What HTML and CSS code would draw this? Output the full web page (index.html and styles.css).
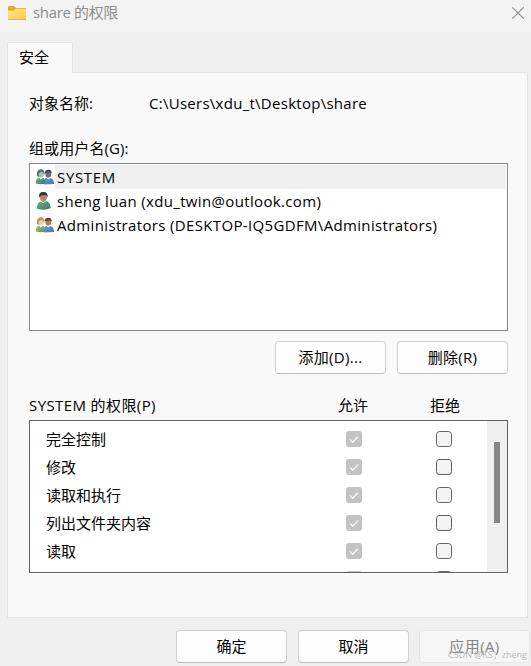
FILE: index.html
```html
<!DOCTYPE html>
<html lang="zh-CN">
<head>
<meta charset="utf-8">
<title>share 的权限</title>
<link rel="stylesheet" href="styles.css">
</head>
<body>
<svg class="defs" width="0" height="0" aria-hidden="true">
  <defs>
    <linearGradient id="gold" x1="0" y1="0" x2="1" y2="1"><stop offset="0" stop-color="#ffe59a"/><stop offset="1" stop-color="#fbc840"/></linearGradient>
    <linearGradient id="green" x1="0" y1="0" x2="1" y2="1"><stop offset="0" stop-color="#6fae8c"/><stop offset="1" stop-color="#2b8258"/></linearGradient>
    <linearGradient id="blue" x1="0" y1="0" x2="1" y2="1"><stop offset="0" stop-color="#6f97c8"/><stop offset="1" stop-color="#4678b4"/></linearGradient>
    <linearGradient id="olive" x1="0" y1="0" x2="1" y2="1"><stop offset="0" stop-color="#a5c58c"/><stop offset="1" stop-color="#55924a"/></linearGradient>
    <symbol id="box-on" viewBox="0 0 16 16"><rect width="16" height="16" rx="3" fill="#c3c3c3"/><path d="M4 8.3l2.7 2.8L12 5.6" fill="none" stroke="#fff" stroke-width="1.1"/></symbol>
    <symbol id="box-off" viewBox="0 0 16 16"><rect x=".5" y=".5" width="15" height="15" rx="3" fill="#f3f3f3" stroke="#626262"/></symbol>
  </defs>
</svg>
<div class="window">
  <header class="titlebar">
    <svg class="folder" width="18" height="14" viewBox="0 0 18 14"><path d="M0 1.2Q0 0 1.2 0h4.3q.6 0 1 .5L8 2h8.8Q18 2 18 3.2V8H0z" fill="#e9aa20"/><path d="M0 4.4h6.1L8 2.8h10v10q0 1.2-1.2 1.2H1.2Q0 14 0 12.8z" fill="url(#gold)"/><path d="M.3 13.5h17.4" stroke="#e8ae35"/></svg>
    <h1>share 的权限</h1>
    <svg class="close" width="12" height="12" viewBox="0 0 12 12"><path d="M.3.3l11.4 11.4M11.7.3L.3 11.7" stroke="#8b8b8b" stroke-width="1.1"/></svg>
  </header>
  <nav class="tabs"><span class="tab">安全</span></nav>
  <main class="panel">
    <div class="object"><span class="key">对象名称:</span><span class="path">C:\Users\xdu_t\Desktop\share</span></div>
    <div class="caption">组或用户名(G):</div>
    <ul class="users">
      <li>
        <svg width="18" height="16" viewBox="0 0 18 16"><ellipse cx="12.3" cy="4.7" rx="2.9" ry="3.9" fill="#7d6a66"/><path d="M8.8 4.6Q8.5.7 12.3.7t3.4 3.9L14 3.2z" fill="#34506e"/><path d="M8 15.4Q7 10 10.4 9l1.8 1.6L14.2 9Q18 9.4 18 15z" fill="url(#blue)"/><ellipse cx="4.8" cy="4.5" rx="3" ry="3.9" fill="#a7c0b6"/><path d="M1 7Q.3.3 4.8.3 9 .3 8.5 6L6 2.6 2.8 4.2 2.8 8z" fill="#57746c"/><path d="M0 14.6Q-.3 9.5 3 8.6l1.8 2L7 8.8q2.6 1 2.2 5.8Q5 16 0 14.6z" fill="url(#green)"/></svg>
        <span class="system">SYSTEM</span>
      </li>
      <li>
        <svg width="18" height="18" viewBox="0 0 18 18"><ellipse cx="7.4" cy="5" rx="3.6" ry="4.8" fill="#ae8a72"/><path d="M3 5.4Q2.4 0 7.4 0q4.9 0 4.4 5.6L10.4 3 5 3.4z" fill="#373733"/><path d="M1 16.8Q.8 10.3 4.7 9.4l2.8 1.8L10.2 9q4 .8 4.6 7Q9 19.2 1 16.8z" fill="url(#green)"/></svg>
        <span>sheng luan (xdu_twin@outlook.com)</span>
      </li>
      <li>
        <svg width="18" height="16" viewBox="0 0 18 16"><ellipse cx="12.3" cy="4.7" rx="2.9" ry="3.9" fill="#ad7855"/><path d="M8.8 4.6Q8.5.7 12.3.7t3.4 3.9L14 3.2z" fill="#59483c"/><path d="M8 15.4Q7 10 10.4 9l1.8 1.6L14.2 9Q18 9.4 18 15z" fill="url(#blue)"/><ellipse cx="4.8" cy="4.5" rx="3" ry="3.9" fill="#ead0a5"/><path d="M1 7Q.3.3 4.8.3 9 .3 8.5 6L6 2.6 2.8 4.2 2.8 8z" fill="#b79a50"/><path d="M0 14.6Q-.3 9.5 3 8.6l1.8 2L7 8.8q2.6 1 2.2 5.8Q5 16 0 14.6z" fill="url(#olive)"/></svg>
        <span>Administrators (DESKTOP-IQ5GDFM\Administrators)</span>
      </li>
    </ul>
    <div class="actions"><button>添加(D)...</button><button>删除(R)</button></div>
    <div class="heads"><span class="subject">SYSTEM 的权限(P)</span><span class="center">允许</span><span class="center">拒绝</span></div>
    <div class="perms">
      <div class="rows">
        <div class="row"><span>完全控制</span><svg><use href="#box-on"/></svg><svg><use href="#box-off"/></svg></div>
        <div class="row"><span>修改</span><svg><use href="#box-on"/></svg><svg><use href="#box-off"/></svg></div>
        <div class="row"><span>读取和执行</span><svg><use href="#box-on"/></svg><svg><use href="#box-off"/></svg></div>
        <div class="row"><span>列出文件夹内容</span><svg><use href="#box-on"/></svg><svg><use href="#box-off"/></svg></div>
        <div class="row"><span>读取</span><svg><use href="#box-on"/></svg><svg><use href="#box-off"/></svg></div>
        <div class="row"><span></span><svg><use href="#box-on"/></svg><svg><use href="#box-off"/></svg></div>
      </div>
      <div class="scroll"><div class="thumb"></div></div>
    </div>
  </main>
  <footer><button>确定</button><button>取消</button><button class="disabled">应用(A)</button></footer>
  <div class="mark">CSDN @KS；zheng</div>
</div>
</body>
</html>
```
FILE: styles.css
```css
* { box-sizing: border-box; }
body { margin: 0; }
.defs { position: absolute; }
.window {
  position: relative;
  width: 531px;
  height: 666px;
  overflow: hidden;
  background: #efefef;
  color: #000;
  font: 15px/20px "Open Sans", "Noto Sans CJK SC", sans-serif;
  white-space: nowrap;
}
.titlebar {
  display: flex;
  height: 32px;
  padding: 0 7px 0 8px;
  background: #f3f3f3;
}
.folder { margin-top: 6px; }
.close { margin: 7px 0 0 auto; }
h1 {
  margin: 2px 0 0 7px;
  color: #8d8d8d;
  font-size: 15px;
  font-weight: 400;
  letter-spacing: -.35px;
}
.tabs { height: 40px; padding: 10px 0 0 7px; }
.tab {
  position: relative;
  z-index: 1;
  display: block;
  width: 66px;
  height: 31px;
  padding: 4px 0 0 11px;
  border: 1px solid #e3e3e3;
  border-bottom: 0;
  background: #f9f9f9;
}
.panel {
  width: 521px;
  height: 546px;
  margin-left: 7px;
  padding: 20px 19px 0 21px;
  border: 1px solid #e3e3e3;
  background: #f9f9f9;
}
.object { display: flex; }
.key { width: 120px; }
.path { letter-spacing: .27px; }
.caption { margin-top: 25px; letter-spacing: .1px; }
.users {
  height: 168px;
  margin: 5px 0 0;
  padding: 1px;
  border: 1px solid #828790;
  background: #fff;
  list-style: none;
  letter-spacing: .345px;
}
.users .system { letter-spacing: .65px; }
.users li { display: flex; height: 24px; padding-left: 5px; }
.users svg { flex: none; margin-top: 4px; }
.users li:nth-child(2) svg { margin-top: 3px; }
.users span { flex: 1; margin-left: 1px; padding: 2px 0 0 2px; }
.users li:first-child span { background: #efefef; }
.actions { display: flex; justify-content: flex-end; gap: 11px; margin-top: 10px; letter-spacing: .3px; }
button {
  width: 111px;
  height: 33px;
  padding: 0 0 2px;
  border: 1px solid #d0d0d0;
  border-bottom-color: #bdbdbd;
  border-radius: 4px;
  background: #fdfdfd;
  color: #000;
  font: inherit;
  letter-spacing: inherit;
}
.heads { display: grid; grid-template-columns: 278px 92px 92px; margin-top: 21px; }
.subject { letter-spacing: .4px; }
.center { text-align: center; }
.perms {
  display: flex;
  height: 153px;
  margin-top: 5px;
  overflow: hidden;
  border: 1px solid #626262;
  background: #fff;
}
.rows { flex: 1; padding-top: 4px; }
.row {
  display: grid;
  grid-template-columns: 300px 90px 16px;
  align-items: center;
  height: 28px;
  padding-left: 16px;
}
.row svg { width: 16px; height: 16px; }
.scroll { width: 20px; padding: 21px 0 0 7px; background: #efefef; }
.thumb { width: 6px; height: 81px; background: #868686; }
footer { display: flex; gap: 11px; padding: 12px 0 0 176px; }
footer button { flex: none; }
.disabled { margin-left: -1px; border-color: #e5e5e5; background: #f6f6f6; color: #858585; letter-spacing: .4px; }
.mark {
  position: absolute;
  right: 4px;
  bottom: 4px;
  color: #b8b8b8;
  font: 9px/14px "Open Sans", "Noto Sans CJK SC", sans-serif;
}
```
